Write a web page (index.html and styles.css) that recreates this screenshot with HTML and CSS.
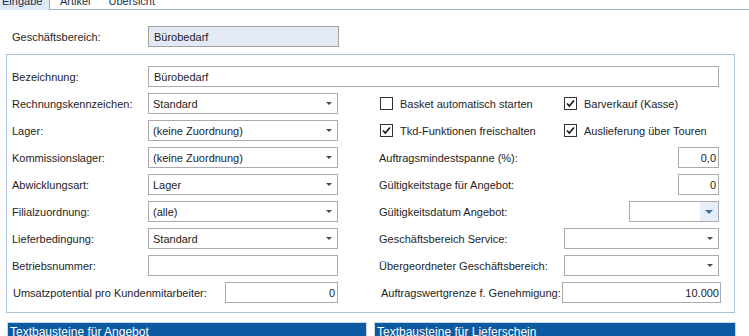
FILE: index.html
```html
<!DOCTYPE html>
<html lang="de">

<head>
    <meta charset="UTF-8">
    <meta name="viewport" content="width=device-width, initial-scale=1.0">
    <title>Geschäftsbereich</title>
    <link rel="stylesheet" href="styles.css">
</head>

<body>
    <div class="tabs">
        <div class="tab active">Eingabe</div>
        <div class="tab">Artikel</div>
        <div class="tab">Übersicht</div>
    </div>

    <div class="head-row">
        <span class="label">Geschäftsbereich:</span>
        <div class="box readonly wide-select">Bürobedarf</div>
    </div>

    <div class="group">
        <div class="full-row">
            <span class="label">Bezeichnung:</span>
            <div class="box full">Bürobedarf</div>
        </div>

        <div class="form-grid">
            <span class="label">Rechnungskennzeichen:</span>
            <div class="box select">Standard<span class="arrow"></span></div>
            <span></span>
            <div class="checks">
                <label class="check"><span class="checkbox"></span>Basket automatisch starten</label>
                <label class="check"><span class="checkbox checked"><svg viewBox="0 0 11 11"><path d="M2 5.5 L4.3 8 L9 2.5" /></svg></span>Barverkauf (Kasse)</label>
            </div>

            <span class="label">Lager:</span>
            <div class="box select">(keine Zuordnung)<span class="arrow"></span></div>
            <span></span>
            <div class="checks">
                <label class="check"><span class="checkbox checked"><svg viewBox="0 0 11 11"><path d="M2 5.5 L4.3 8 L9 2.5" /></svg></span>Tkd-Funktionen freischalten</label>
                <label class="check"><span class="checkbox checked"><svg viewBox="0 0 11 11"><path d="M2 5.5 L4.3 8 L9 2.5" /></svg></span>Auslieferung über Touren</label>
            </div>

            <span class="label">Kommissionslager:</span>
            <div class="box select">(keine Zuordnung)<span class="arrow"></span></div>
            <span></span>
            <div class="right-row">
                <span class="label">Auftragsmindestspanne (%):</span>
                <div class="box number">0,0</div>
            </div>

            <span class="label">Abwicklungsart:</span>
            <div class="box select">Lager<span class="arrow"></span></div>
            <span></span>
            <div class="right-row">
                <span class="label">Gültigkeitstage für Angebot:</span>
                <div class="box number">0</div>
            </div>

            <span class="label">Filialzuordnung:</span>
            <div class="box select">(alle)<span class="arrow"></span></div>
            <span></span>
            <div class="right-row">
                <span class="label">Gültigkeitsdatum Angebot:</span>
                <div class="box date"><span class="date-button"><span class="arrow blue"></span></span></div>
            </div>

            <span class="label">Lieferbedingung:</span>
            <div class="box select">Standard<span class="arrow"></span></div>
            <span></span>
            <div class="right-row">
                <span class="label">Geschäftsbereich Service:</span>
                <div class="box select service"><span class="arrow"></span></div>
            </div>

            <span class="label">Betriebsnummer:</span>
            <div class="box"></div>
            <span></span>
            <div class="right-row">
                <span class="label">Übergeordneter Geschäftsbereich:</span>
                <div class="box select service"><span class="arrow"></span></div>
            </div>

            <div class="span-row">
                <span class="label indent">Umsatzpotential pro Kundenmitarbeiter:</span>
                <div class="box number potential">0</div>
            </div>
            <span></span>
            <div class="right-row">
                <span class="label indent">Auftragswertgrenze f. Genehmigung:</span>
                <div class="box number limit">10.000</div>
            </div>
        </div>
    </div>

    <div class="panels">
        <div class="panel left">
            <div class="panel-title">Textbausteine für Angebot</div>
        </div>
        <div class="panel right">
            <div class="panel-title">Textbausteine für Lieferschein</div>
        </div>
    </div>
</body>

</html>
```

FILE: styles.css
```css
body {
    margin: 0;
    height: 336px;
    overflow: hidden;
    background-color: #ffffff;
    font-family: "Liberation Sans", Arial, sans-serif;
    font-size: 11px;
    color: #1e1e1e;
}

.tabs {
    display: flex;
    height: 18px;
    margin-top: -9px;
    border-bottom: 1px solid #9bb7dc;
}

.tab {
    line-height: 18px;
    padding: 1px 9px 0;
    color: #1c2f48;
}

.tab.active {
    width: 47px;
    padding: 1px 0 0 2px;
    height: 18px;
    margin-bottom: -1px;
    background-color: #dde9f7;
    border-right: 1px solid #8daedb;
}

.tab.active + .tab {
    padding-left: 10px;
}

.head-row {
    display: flex;
    align-items: center;
    padding: 16px 0 0 12px;
}

.label {
    width: 136px;
    flex-shrink: 0;
    white-space: nowrap;
}

.box {
    height: 21px;
    box-sizing: border-box;
    border: 1px solid #ababab;
    background-color: #ffffff;
    padding: 0 4px;
    display: flex;
    align-items: center;
    white-space: nowrap;
}

.readonly {
    width: 191px;
    padding-left: 5px;
    background-color: #e3eaf5;
    border-color: #a2a2a2;
}

.group {
    margin: 7px 0 0 6px;
    width: 729px;
    box-sizing: border-box;
    border: 1px solid #adc2d8;
    padding: 11px 15px 9px 5px;
}

.full-row {
    display: flex;
    align-items: center;
    margin-bottom: 6px;
}

.box.full {
    width: 571px;
    padding-left: 5px;
}

.form-grid {
    display: grid;
    grid-template-columns: 136px 190px 41px 340px;
    grid-auto-rows: 21px;
    row-gap: 6px;
    align-items: center;
}

.box.select {
    justify-content: space-between;
}

.arrow {
    width: 0;
    height: 0;
    border-left: 3px solid transparent;
    border-right: 3px solid transparent;
    border-top: 3px solid #4a4a4a;
    margin-right: 1px;
}

.arrow.blue {
    border-left-width: 4px;
    border-right-width: 4px;
    border-top: 4px solid #4e6f9c;
    margin: 0;
}

.checks {
    display: flex;
    align-items: center;
}

.check {
    display: flex;
    align-items: center;
    gap: 7px;
    white-space: nowrap;
}

.check:first-child {
    width: 184px;
    margin-left: 1px;
}

.checkbox {
    width: 13px;
    height: 13px;
    box-sizing: border-box;
    border: 1px solid #333333;
    background-color: #ffffff;
    display: flex;
    align-items: center;
    justify-content: center;
}

.checkbox svg {
    width: 11px;
    height: 11px;
    fill: none;
    stroke: #1a1a1a;
    stroke-width: 1.7;
}

.right-row {
    display: flex;
    align-items: center;
    justify-content: space-between;
}

.right-row .label,
.span-row .label {
    width: auto;
}

.label.indent {
    padding-left: 1px;
}

.right-row .label.indent {
    padding-left: 2px;
}

.box.number {
    width: 41px;
    justify-content: flex-end;
    padding-right: 2px;
}

.box.date {
    width: 90px;
    justify-content: flex-end;
    padding: 0;
}

.date-button {
    width: 18px;
    height: 19px;
    background-color: #e6eefa;
    display: flex;
    align-items: center;
    justify-content: center;
}

.box.service {
    width: 155px;
    justify-content: flex-end;
}

.span-row {
    grid-column: 1 / 3;
    display: flex;
    align-items: center;
    justify-content: space-between;
}

.box.potential {
    width: 113px;
}

.box.limit {
    width: 159px;
    margin-right: -2px;
    padding-right: 1px;
}

.panels {
    display: flex;
    gap: 7px;
    margin: 9px 0 0 7px;
}

.panel {
    border: 1px solid #c9d5e1;
    height: 30px;
}

.panel.left {
    width: 358px;
}

.panel.right {
    width: 360px;
}

.panel-title {
    background-color: #0b5aa2;
    color: #ffffff;
    font-size: 12px;
    padding: 2px 2px;
    line-height: 14px;
}
```
